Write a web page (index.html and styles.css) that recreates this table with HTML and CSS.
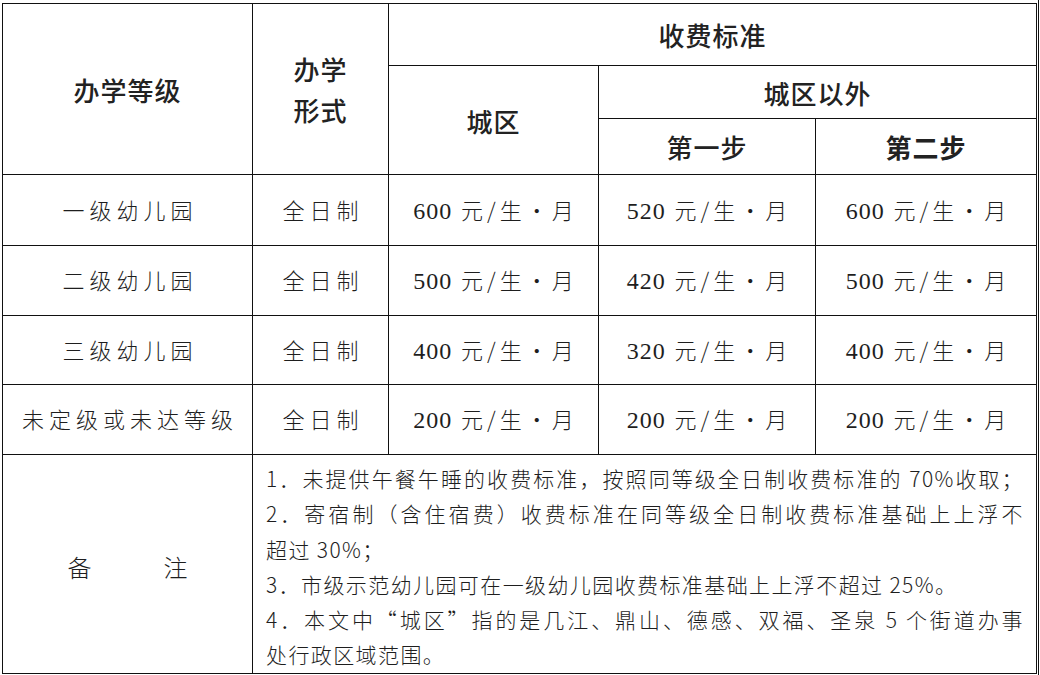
FILE: index.html
```html
<!DOCTYPE html>
<html lang="zh-CN">
<head>
<meta charset="utf-8">
<title>收费标准</title>
<link rel="stylesheet" href="styles.css">
</head>
<body>
<div class="page">
  <table class="fees">
    <colgroup>
      <col class="c1"><col class="c2"><col class="c3"><col class="c4"><col class="c5">
    </colgroup>
    <thead>
      <tr class="h1">
        <th rowspan="3" class="hd">办学等级</th>
        <th rowspan="3" class="hd two">办学<br>形式</th>
        <th colspan="3" class="hd">收费标准</th>
      </tr>
      <tr class="h2">
        <th rowspan="2" class="hd">城区</th>
        <th colspan="2" class="hd">城区以外</th>
      </tr>
      <tr class="h3">
        <th class="hd">第一步</th>
        <th class="hd strong">第二步</th>
      </tr>
    </thead>
    <tbody>
      <tr class="r1">
        <td class="cn">一级幼儿园</td>
        <td class="cn">全日制</td>
        <td class="money"><span class="num">600</span> 元/生・月</td>
        <td class="money"><span class="num">520</span> 元/生・月</td>
        <td class="money"><span class="num">600</span> 元/生・月</td>
      </tr>
      <tr class="r2">
        <td class="cn">二级幼儿园</td>
        <td class="cn">全日制</td>
        <td class="money"><span class="num">500</span> 元/生・月</td>
        <td class="money"><span class="num">420</span> 元/生・月</td>
        <td class="money"><span class="num">500</span> 元/生・月</td>
      </tr>
      <tr class="r3">
        <td class="cn">三级幼儿园</td>
        <td class="cn">全日制</td>
        <td class="money"><span class="num">400</span> 元/生・月</td>
        <td class="money"><span class="num">320</span> 元/生・月</td>
        <td class="money"><span class="num">400</span> 元/生・月</td>
      </tr>
      <tr class="r4">
        <td class="cn">未定级或未达等级</td>
        <td class="cn">全日制</td>
        <td class="money"><span class="num">200</span> 元/生・月</td>
        <td class="money"><span class="num">200</span> 元/生・月</td>
        <td class="money"><span class="num">200</span> 元/生・月</td>
      </tr>
      <tr class="notes-row">
        <td class="remark">备　　　注</td>
        <td colspan="4" class="notes">
          <p class="note"><span class="full">1．未提供午餐午睡的收费标准，按照同等级全日制收费标准的 70%收取；</span></p>
          <p class="note"><span class="full">2．寄宿制（含住宿费）收费标准在同等级全日制收费标准基础上上浮不</span>超过 30%；</p>
          <p class="note">3．市级示范幼儿园可在一级幼儿园收费标准基础上上浮不超过 25%。</p>
          <p class="note"><span class="full">4．本文中“城区”指的是几江、鼎山、德感、双福、圣泉 5 个街道办事</span>处行政区域范围。</p>
        </td>
      </tr>
    </tbody>
  </table>
</div>
</body>
</html>
```

FILE: styles.css
```css
html, body {
  margin: 0;
  padding: 0;
  background: #ffffff;
}

body {
  font-family: "Noto Sans CJK SC", sans-serif;
  color: #222;
}

.page {
  box-sizing: border-box;
  width: 1039px;
  height: 675px;
  padding: 3px 0 0 2px;
  border-right: 1px solid #111;
}

.fees {
  border-collapse: collapse;
  table-layout: fixed;
  width: 1034px;
}

.c1 { width: 250px; }
.c2 { width: 136px; }
.c3 { width: 210px; }
.c4 { width: 217px; }
.c5 { width: 221px; }

.fees th,
.fees td {
  border: 1px solid #111;
  padding: 0;
  text-align: center;
  vertical-align: middle;
}

.h1 { height: 62px; }
.h2 { height: 53px; }
.h3 { height: 56px; }
.r1 { height: 71px; }
.r2 { height: 70px; }
.r3 { height: 69px; }
.r4 { height: 70px; }
.notes-row { height: 218px; }

.hd {
  font-family: "Noto Sans CJK SC", sans-serif;
  font-size: 26px;
  font-weight: 500;
  letter-spacing: 1px;
  color: #222;
  padding-top: 4px;
}

.hd.two {
  line-height: 41px;
}

.hd.strong {
  font-weight: 700;
}

.cn {
  font-family: "Noto Sans CJK SC", sans-serif;
  font-size: 22px;
  font-weight: 300;
  letter-spacing: 5px;
  padding-left: 5px !important;
  padding-bottom: 3px !important;
  color: #1e1e1e;
}

.money {
  font-family: "Noto Sans CJK SC", sans-serif;
  font-size: 22px;
  font-weight: 300;
  letter-spacing: 4px;
  padding-left: 4px !important;
  padding-bottom: 3px !important;
  color: #1e1e1e;
}

.num {
  font-family: "Liberation Serif", serif;
  font-size: 24px;
  font-weight: 400;
  letter-spacing: 1px;
}

.remark {
  font-family: "Noto Sans CJK SC", sans-serif;
  font-size: 24px;
  font-weight: 300;
  color: #1e1e1e;
  padding-top: 6px !important;
}

.notes {
  vertical-align: top !important;
  text-align: left !important;
  padding: 6px 12px 0 13px !important;
}

.note {
  margin: 0;
  font-family: "Noto Sans CJK SC", sans-serif;
  font-size: 21px;
  font-weight: 300;
  line-height: 35.3px;
  letter-spacing: 1.4px;
  color: #1e1e1e;
}

.full {
  display: block;
  text-align: justify;
  text-align-last: justify;
}
```
